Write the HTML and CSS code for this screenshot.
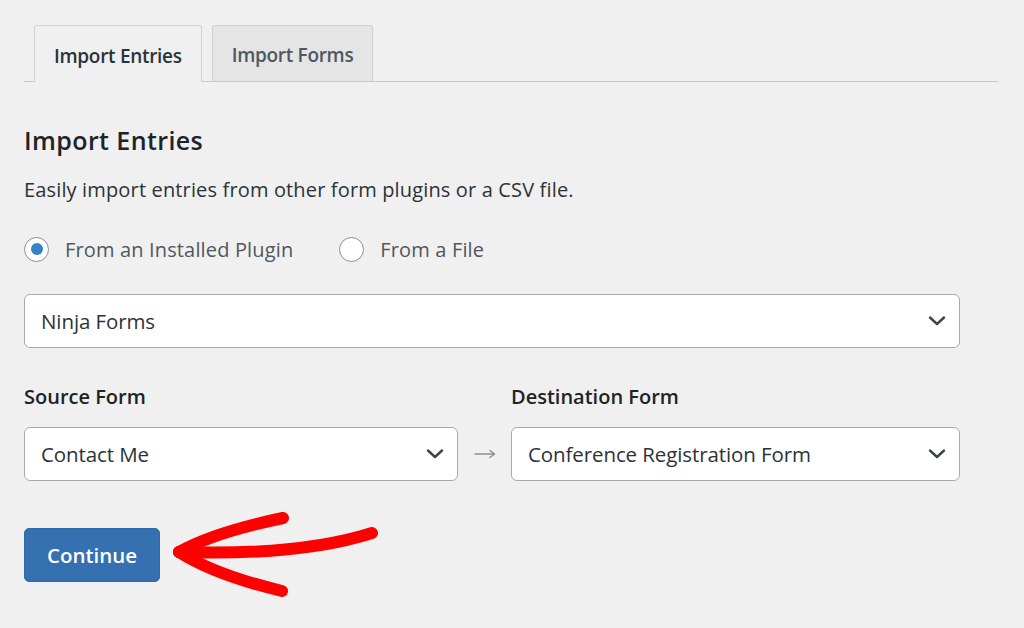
FILE: index.html
```html
<!DOCTYPE html>
<html lang="en">
<head>
<meta charset="utf-8">
<title>Import Entries</title>
<link rel="stylesheet" href="styles.css">
</head>
<body>
<div class="page">
  <nav class="tabs">
    <a class="tab tab-active">Import Entries</a>
    <a class="tab">Import Forms</a>
  </nav>

  <section class="content">
    <h2 class="title">Import Entries</h2>
    <p class="desc">Easily import entries from other form plugins or a CSV file.</p>

    <div class="radios">
      <label class="radio"><span class="radio-dot radio-checked"></span>From an Installed Plugin</label>
      <label class="radio"><span class="radio-dot"></span>From a File</label>
    </div>

    <div class="select select-full">
      <span>Ninja Forms</span>
      <svg class="chev" viewBox="0 0 18 10" width="18" height="10"><path d="M2 1.5 L9 8 L16 1.5" fill="none" stroke="#3c434a" stroke-width="2.4" stroke-linecap="round" stroke-linejoin="round"/></svg>
    </div>

    <div class="map">
      <div class="field-label">Source Form</div>
      <div></div>
      <div class="field-label">Destination Form</div>
      <div class="select">
        <span>Contact Me</span>
        <svg class="chev" viewBox="0 0 18 10" width="18" height="10"><path d="M2 1.5 L9 8 L16 1.5" fill="none" stroke="#3c434a" stroke-width="2.4" stroke-linecap="round" stroke-linejoin="round"/></svg>
      </div>
      <div class="map-arrow">
        <svg viewBox="0 0 22 10" width="22" height="10"><path d="M1 5 H20 M16 1.5 L20.5 5 L16 8.5" fill="none" stroke="#8c8f94" stroke-width="1.4" stroke-linecap="round" stroke-linejoin="round"/></svg>
      </div>
      <div class="select">
        <span>Conference Registration Form</span>
        <svg class="chev" viewBox="0 0 18 10" width="18" height="10"><path d="M2 1.5 L9 8 L16 1.5" fill="none" stroke="#3c434a" stroke-width="2.4" stroke-linecap="round" stroke-linejoin="round"/></svg>
      </div>
    </div>

    <button class="btn">Continue</button>
  </section>
</div>

<svg class="annotation" viewBox="0 0 1024 628" width="1024" height="628">
  <g fill="none" stroke="#ff0000" stroke-width="12" stroke-linecap="round" stroke-linejoin="round">
    <path d="M179 552 Q300 556 372 533"/>
    <path d="M179 552 Q215 532 283 518"/>
    <path d="M179 552 Q215 575 282 591"/>
  </g>
</svg>
</body>
</html>
```

FILE: styles.css
```css
html, body {
  margin: 0;
  padding: 0;
}

body {
  position: relative;
  width: 1024px;
  height: 628px;
  overflow: hidden;
  background: #f0f0f0;
  font-family: "Segoe UI", "Open Sans", "Noto Sans", sans-serif;
  color: #3c434a;
}

.page {
  padding: 25px 26px 0 24px;
}

.tabs {
  display: flex;
  gap: 10px;
  padding-left: 10px;
  border-bottom: 1px solid #c8c8c8;
  height: 56px;
}

.tab {
  display: flex;
  align-items: center;
  padding: 3px 19px 0;
  border: 1px solid #d0d0d0;
  border-bottom: none;
  border-radius: 3px 3px 0 0;
  background: #e5e5e5;
  color: #50575e;
  font-size: 19px;
  font-weight: 600;
  letter-spacing: -0.3px;
  height: 56px;
  box-sizing: border-box;
}

.tab-active {
  background: #f0f0f0;
  color: #2c3338;
  height: 57px;
  margin-bottom: -1px;
}

.content {
  width: 936px;
}

.title {
  margin: 43px 0 0;
  font-size: 25px;
  line-height: 31px;
  font-weight: 600;
  color: #1d2327;
  letter-spacing: 0.4px;
}

.desc {
  margin: 19px 0 0;
  font-size: 20px;
  line-height: 29px;
  color: #2c3338;
  letter-spacing: 0.15px;
}

.radios {
  display: flex;
  align-items: center;
  gap: 46px;
  margin-top: 30px;
  height: 30px;
}

.radio {
  display: flex;
  align-items: center;
  gap: 16px;
  font-size: 20px;
  color: #50575e;
  letter-spacing: 0.15px;
}

.radio-dot {
  width: 23px;
  height: 23px;
  border: 1px solid #8c8f94;
  border-radius: 50%;
  background: #fff;
  display: flex;
  align-items: center;
  justify-content: center;
}

.radio-checked::after {
  content: "";
  width: 12px;
  height: 12px;
  border-radius: 50%;
  background: #3582c4;
}

.select {
  height: 54px;
  box-sizing: border-box;
  border: 1px solid #a7aaad;
  border-radius: 6px;
  background: #fff;
  display: flex;
  align-items: center;
  justify-content: space-between;
  padding: 0 13px 0 16px;
  font-size: 20.5px;
  color: #2c3338;
  letter-spacing: -0.1px;
}

.select-full {
  margin-top: 30px;
}

.chev {
  display: block;
}

.map {
  display: grid;
  grid-template-columns: 434px 53px 449px;
  row-gap: 16px;
  margin-top: 34px;
}

.field-label {
  font-size: 20px;
  line-height: 29px;
  font-weight: 600;
  color: #1d2327;
}

.map-arrow {
  display: flex;
  align-items: center;
  justify-content: center;
}

.map-arrow svg {
  display: block;
}

.btn {
  margin-top: 47px;
  width: 136px;
  height: 54px;
  border: 1px solid #2f6aa8;
  border-radius: 5px;
  background: #3571b0;
  color: #fff;
  font-family: inherit;
  font-size: 20.5px;
  font-weight: 600;
  padding: 0;
}

.annotation {
  position: absolute;
  top: 0;
  left: 0;
  pointer-events: none;
}
```
